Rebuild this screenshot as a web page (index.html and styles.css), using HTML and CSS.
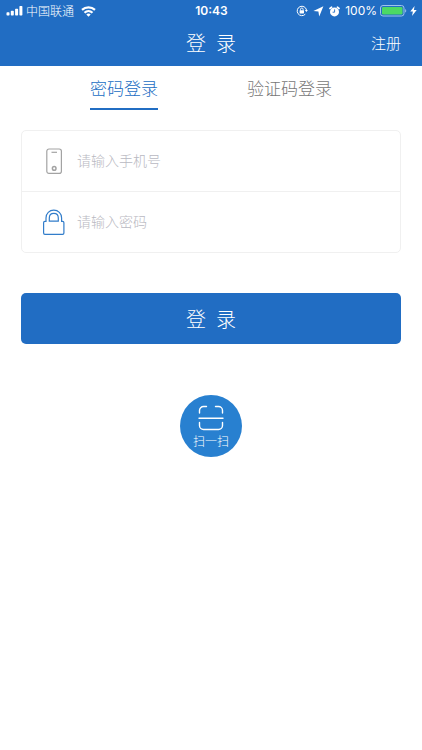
FILE: index.html
```html
<!DOCTYPE html>
<html lang="zh-CN">
<head>
<meta charset="utf-8">
<meta name="viewport" content="width=device-width, initial-scale=1">
<title>登录</title>
<link rel="stylesheet" href="styles.css">
</head>
<body>
<header class="header">
  <div class="status">
    <div class="status-left">
      <svg width="17" height="10" viewBox="0 0 17 10" fill="#fff" aria-hidden="true">
        <rect x="0.5" y="6.3" width="3" height="3.2" rx="0.7"/>
        <rect x="4.8" y="4.8" width="3" height="4.7" rx="0.7"/>
        <rect x="9.1" y="2.7" width="3" height="6.8" rx="0.7"/>
        <rect x="13.4" y="0" width="3" height="9.5" rx="0.7"/>
      </svg>
      <span class="carrier">中国联通</span>
      <svg width="15" height="11" viewBox="0 0 15 11" fill="none" stroke="#fff" stroke-width="2.2" aria-hidden="true">
        <path d="M1 3.900a9.600 9.600 0 0 1 13 0"/>
        <path d="M3.500 6.700a5.800 5.800 0 0 1 8 0"/>
        <path d="M5.300 8.500a3.200 3.200 0 0 1 4.400 0L7.500 10.800z" fill="#fff" stroke="none"/>
      </svg>
    </div>
    <time class="clock">10:43</time>
    <div class="status-right">
      <svg width="12" height="12" viewBox="0 0 12 12" fill="none" stroke="#fff" aria-hidden="true">
        <path d="M10.5 5A4.7 4.7 0 1 0 9.300 9.200"/>
        <path d="M8.900 4.900h3l-1.500 2.200z" fill="#fff" stroke="none"/>
        <rect x="3.600" y="5.200" width="4.400" height="3.300" rx="0.400" fill="#fff" stroke="none"/>
        <path d="M4.500 5.400V4.300a1.300 1.300 0 0 1 2.600 0v1.100" stroke-width="0.9"/>
      </svg>
      <svg width="11" height="11" viewBox="0 0 11 11" fill="#fff" aria-hidden="true">
        <path d="M10.400 0.300L6.200 10.600L5.400 5.500L0.400 5z"/>
      </svg>
      <svg width="11" height="11" viewBox="0 0 11 11" aria-hidden="true">
        <circle cx="5.500" cy="5.900" r="4.500" fill="#fff"/>
        <path d="M1 2.500L2.600 1.200M10 2.500L8.400 1.200" stroke="#fff" stroke-width="1.700" stroke-linecap="round"/>
        <path d="M5.600 3.400v2.800H3.600" fill="none" stroke="#216dc3" stroke-width="0.9"/>
      </svg>
      <span class="percent">100%</span>
      <svg class="battery" width="27" height="12" viewBox="0 0 27 12" aria-hidden="true">
        <rect x="0.5" y="0.5" width="23.500" height="10.500" rx="2.500" fill="none" stroke="#9fc4ec"/>
        <rect x="2" y="2" width="20.500" height="7.500" rx="1.300" fill="#4cd964"/>
        <path d="M25.200 4v3.600c1.400-.5 1.400-3.100 0-3.600z" fill="#9fc4ec"/>
      </svg>
      <svg width="7" height="10" viewBox="0 0 7 10" fill="#fff" aria-hidden="true">
        <path d="M4.600 0L0.300 5.500h2.600L2 10l4.700-5.900H3.900z"/>
      </svg>
    </div>
  </div>
  <div class="nav">
    <h1 class="title">登&ensp;录</h1>
    <a class="register" href="#">注册</a>
  </div>
</header>
<main class="main">
  <nav class="tabs">
    <a class="tab tab-active" href="#" aria-current="page">密码登录</a>
    <a class="tab" href="#">验证码登录</a>
  </nav>
  <form class="form">
    <div class="fields">
      <label class="field">
        <svg class="field-icon" width="24" height="28" viewBox="0 0 24 28" fill="none" stroke="#a3a3a3" stroke-width="1.2" aria-hidden="true">
          <rect x="4.800" y="2" width="14.600" height="24.400" rx="2.200"/>
          <path d="M9.500 5.300h5.500"/>
          <circle cx="12.200" cy="21.400" r="1.800" stroke-width="1.500"/>
        </svg>
        <input class="input" type="tel" placeholder="请输入手机号" aria-label="手机号">
      </label>
      <label class="field">
        <svg class="field-icon" width="24" height="28" viewBox="0 0 24 28" fill="none" stroke="#327dca" stroke-width="1.2" aria-hidden="true">
          <path d="M4 13.400V10C4 5.400 7.400 2.200 11.800 2.200S19.600 5.400 19.600 10v3.400h1c.8 0 1.300.5 1.300 1.300v10.400c0 .8-.5 1.300-1.300 1.300H2.900c-.8 0-1.300-.5-1.300-1.300V14.700c0-.8.5-1.300 1.300-1.300z"/>
          <path d="M7.300 13.200V10c0-2.700 1.900-4.600 4.500-4.600s4.500 1.900 4.500 4.600v3.200z"/>
        </svg>
        <input class="input" type="password" placeholder="请输入密码" aria-label="密码">
      </label>
    </div>
    <button class="submit" type="submit">登&ensp;录</button>
  </form>
  <button class="scan" type="button">
    <svg width="26" height="26" viewBox="0 0 26 26" fill="none" stroke="#fff" stroke-width="1.400" stroke-linecap="round" aria-hidden="true">
      <path d="M1.500 8V5.500a4 4 0 0 1 4-4H8.500M17.500 1.500h3a4 4 0 0 1 4 4V8"/>
      <path d="M1 13.200h24"/>
      <path d="M1.500 17.500v3a4 4 0 0 0 4 4h15a4 4 0 0 0 4-4v-3"/>
    </svg>
    <span>扫一扫</span>
  </button>
</main>
</body>
</html>
```
FILE: styles.css
```css
* {
  box-sizing: border-box;
}

body {
  margin: 0;
  background: #fff;
  font-family: "Noto Sans CJK SC", sans-serif;
  font-weight: 300;
}

a {
  color: inherit;
  text-decoration: none;
}

svg {
  display: block;
  flex: none;
}

button,
input {
  border: 0;
  padding: 0;
  font: inherit;
}

.header {
  background: #216dc3;
  color: #fff;
}

.status {
  display: grid;
  grid-template-columns: 1fr auto 1fr;
  align-items: center;
  height: 22px;
  padding: 0 5px 0 6px;
  font-size: 12px;
  line-height: 20px;
}

.status-left,
.status-right {
  display: flex;
  align-items: center;
}

.status-left {
  gap: 3px;
}

.carrier {
  margin-right: 4px;
}

.clock {
  font-family: Inter, sans-serif;
  font-weight: 600;
}

.status-right {
  justify-content: flex-end;
  gap: 5px;
}

.percent {
  margin-right: -2px;
  font-family: Inter, sans-serif;
  font-weight: 400;
}

.battery {
  margin-right: -2px;
}

.nav {
  display: grid;
  grid-template-columns: 1fr auto 1fr;
  align-items: center;
  height: 44px;
  padding: 0 21px 3px;
}

.title {
  grid-column: 2;
  margin: 0;
  font-size: 20px;
  font-weight: 300;
  line-height: 40px;
}

.register {
  justify-self: end;
  font-size: 15px;
}

.main {
  display: flex;
  flex-direction: column;
  padding: 0 21px;
}

.tabs {
  display: flex;
  justify-content: center;
  gap: 89px;
}

.tab {
  padding: 10px 0 8px;
  border-bottom: 2px solid transparent;
  color: #777;
  font-size: 17px;
  line-height: 24px;
}

.tab-active {
  border-color: #216dc3;
  color: #216dc3;
}

.form {
  display: flex;
  flex-direction: column;
  gap: 40px;
  margin-top: 20px;
}

.fields {
  border: 1px solid #f0f0f0;
  border-radius: 5px;
}

.field {
  display: flex;
  align-items: center;
  gap: 11px;
  height: 60px;
  padding: 0 20px;
}

.field + .field {
  height: 61px;
  border-top: 1px solid #f0f0f0;
}

.input {
  flex: 1;
  min-width: 0;
  padding-bottom: 2px;
  background: transparent;
  color: #333;
  font-size: 14px;
  line-height: 24px;
  outline: 0;
}

.input::placeholder {
  color: #b9b9c2;
}

.submit {
  height: 51px;
  border-radius: 5px;
  background: #216dc3;
  color: #fff;
  font-size: 20px;
}

.scan {
  display: flex;
  flex-direction: column;
  align-items: center;
  align-self: center;
  width: 62px;
  height: 62px;
  margin-top: 51px;
  padding-top: 10px;
  border-radius: 50%;
  background: #2880d0;
  color: #fff;
  font-size: 12px;
  line-height: 20px;
}
```
